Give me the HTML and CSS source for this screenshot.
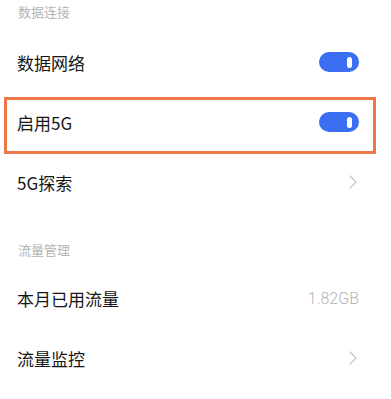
FILE: index.html
```html
<!DOCTYPE html>
<html lang="zh-CN">
<head>
    <meta charset="UTF-8">
    <meta name="viewport" content="width=device-width, initial-scale=1.0">
    <title>移动网络</title>
    <link rel="stylesheet" href="styles.css">
</head>
<body>
    <div class="settings">
        <div class="section-title first">数据连接</div>
        <div class="row">
            <span class="label">数据网络</span>
            <span class="switch on"><span class="knob"></span></span>
        </div>
        <div class="row highlight">
            <span class="label">启用5G</span>
            <span class="switch on"><span class="knob"></span></span>
        </div>
        <div class="row">
            <span class="label">5G探索</span>
            <svg class="chevron" width="8" height="14" viewBox="0 0 8 14">
                <polyline points="1,1 7,7 1,13" fill="none" stroke="#c9c9c9" stroke-width="1.4" stroke-linejoin="round" stroke-linecap="round"/>
            </svg>
        </div>

        <div class="section-title">流量管理</div>
        <div class="row">
            <span class="label">本月已用流量</span>
            <span class="value">1.82GB</span>
        </div>
        <div class="row">
            <span class="label">流量监控</span>
            <svg class="chevron" width="8" height="14" viewBox="0 0 8 14">
                <polyline points="1,1 7,7 1,13" fill="none" stroke="#c9c9c9" stroke-width="1.4" stroke-linejoin="round" stroke-linecap="round"/>
            </svg>
        </div>
    </div>
</body>
</html>
```

FILE: styles.css
```css
body {
    margin: 0;
    background: #ffffff;
    font-family: "Noto Sans CJK SC", "Noto Sans", sans-serif;
    color: #161616;
}

.settings {
    width: 391px;
}

.section-title {
    padding: 28px 18px 8px;
    font-size: 13px;
    line-height: 20px;
    color: #b4b4b4;
}

.section-title.first {
    padding-top: 2px;
    padding-bottom: 10px;
}

.row {
    position: relative;
    height: 60px;
    display: flex;
    align-items: center;
    justify-content: space-between;
    padding: 0 32px 0 17px;
}

.label {
    font-size: 17px;
}

.row.highlight::after {
    content: "";
    position: absolute;
    left: 4px;
    top: 5px;
    width: 372px;
    height: 57px;
    box-sizing: border-box;
    border: 3.5px solid #ec7748;
}

.switch {
    width: 40px;
    height: 20px;
    border-radius: 10px;
    background: #d6d6d6;
    display: flex;
    align-items: center;
    justify-content: flex-end;
    padding-right: 7px;
    box-sizing: border-box;
}

.switch.on {
    background: #3c6ef2;
}

.knob {
    width: 5px;
    height: 11px;
    border-radius: 3px;
    background: #ffffff;
}

.chevron {
    margin-right: 2px;
}

.value {
    font-family: "Roboto", "Noto Sans", sans-serif;
    font-weight: 300;
    font-size: 16px;
    color: #b3b3b3;
}
```
